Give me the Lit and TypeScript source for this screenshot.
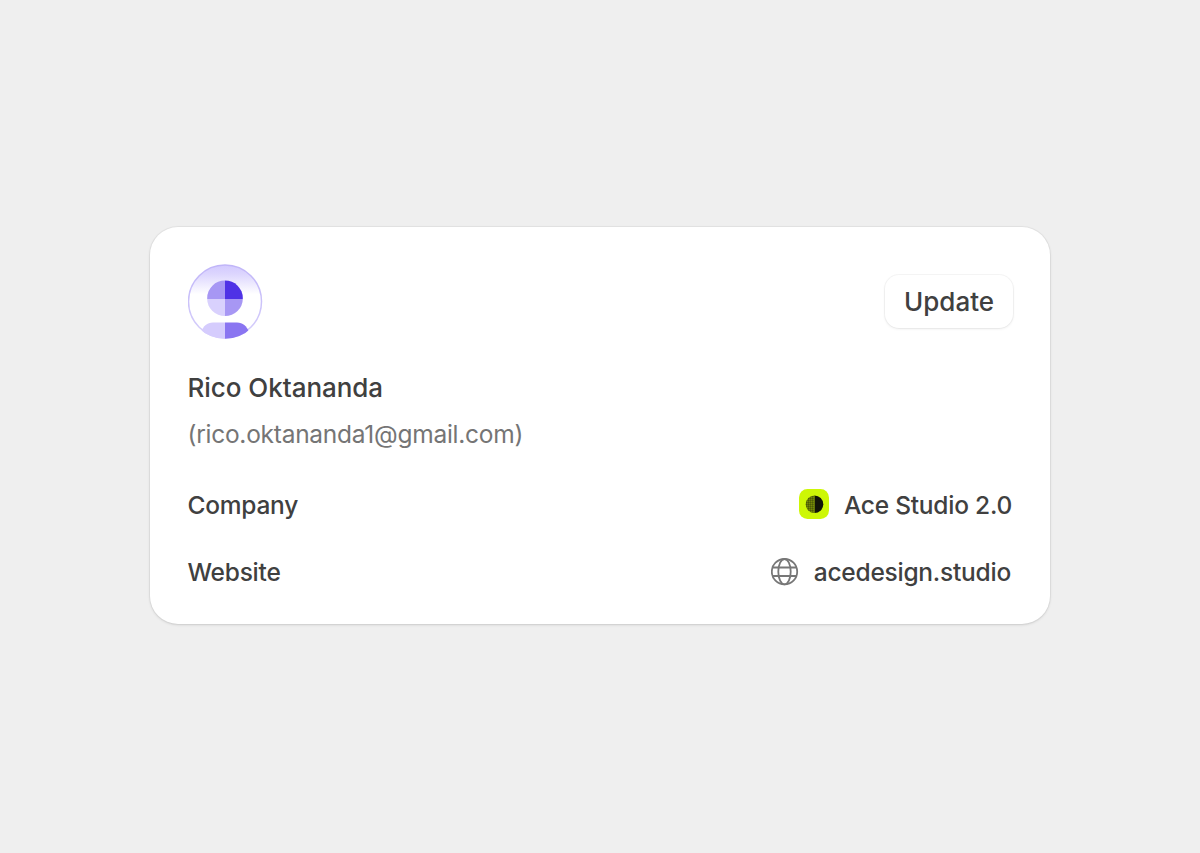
import { LitElement, css, html, svg } from "lit";
import { customElement, property } from "lit/decorators.js";

@customElement("user-avatar")
export class UserAvatar extends LitElement {
  static styles = css`
    :host {
      display: block;
      width: 75px;
      height: 75px;
    }

    svg {
      display: block;
    }
  `;

  render() {
    return html`
      <svg width="75" height="75" viewBox="0 0 75 75">
        <defs>
          <linearGradient id="sky" x1="0" y1="0" x2="0" y2="1">
            <stop offset="0" stop-color="#d3caff" />
            <stop offset="0.12" stop-color="#dcd5fe" />
            <stop offset="0.4" stop-color="#ffffff" />
          </linearGradient>
          <linearGradient id="ring" x1="0" y1="0" x2="0" y2="1">
            <stop offset="0" stop-color="#c0b5f8" />
            <stop offset="1" stop-color="#d6cffb" />
          </linearGradient>
          <clipPath id="frame"><circle cx="37" cy="37.5" r="37.3" /></clipPath>
        </defs>
        <circle cx="37" cy="37.5" r="36.5" fill="url(#sky)" stroke="url(#ring)" stroke-width="1.5" />
        <path d="M37 16.500v18.500H19.200V34A17.800 17.500 0 0 1 37 16.500Z" fill="#a797f4" />
        <path d="M37 16.500v18.500H54.800V34A17.800 17.500 0 0 0 37 16.500Z" fill="#4f32e6" />
        <path d="M37 52V35H19.200A17.800 17 0 0 0 37 52Z" fill="#d9d1fd" />
        <path d="M37 52V35H54.800A17.800 17 0 0 1 37 52Z" fill="#a797f4" />
        <g clip-path="url(#frame)">
          <path d="M37 58.500H25C19 58.500 15.500 62 13 68V76H37Z" fill="#d5ccfd" />
          <path d="M37 58.500H49C55 58.500 58.500 62 61 68V76H37Z" fill="#8a75f1" />
        </g>
      </svg>
    `;
  }
}

@customElement("detail-row")
export class DetailRow extends LitElement {
  static styles = css`
    :host {
      display: flex;
      align-items: center;
      justify-content: space-between;
      height: 32px;
    }

    .value {
      display: flex;
      align-items: center;
      gap: 15px;
    }
  `;

  @property() label = "";

  render() {
    return html`
      <span>${this.label}</span>
      <span class="value"><slot></slot></span>
    `;
  }
}

const companyLogo = () => html`
  <svg class="icon" width="30" height="32" viewBox="0 0 30 32">
    <defs>
      <pattern id="dots" width="2" height="2" patternUnits="userSpaceOnUse">
        <rect width="2" height="2" fill="#5e7005" />
        <rect width="1" height="1" fill="#74880a" />
        <rect x="1" y="1" width="1" height="1" fill="#4c5a08" />
      </pattern>
    </defs>
    <rect width="30" height="30" rx="8.5" fill="#cdf706" />
    <path d="M15.500 6.500A8.800 8.800 0 0 0 15.500 24.100Z" fill="url(#dots)" />
    <path d="M15.500 6.500A8.800 8.800 0 0 1 15.500 24.100Z" fill="#111408" />
    <path d="M15.300 7V24" stroke="#728708" stroke-width="0.6" />
  </svg>
`;

const globeIcon = () => html`
  <svg class="icon" width="28" height="28" viewBox="0 0 28 28" fill="none" stroke="#777" stroke-width="1.8">
    ${svg`
      <circle cx="13.500" cy="13.700" r="12.700" />
      <ellipse cx="13.500" cy="13.700" rx="6.200" ry="12.700" />
      <path d="M1.700 9.500H25.300M1.700 18H25.300" />
    `}
  </svg>
`;

@customElement("app-root")
export class AppRoot extends LitElement {
  static styles = css`
    :host {
      display: flex;
      justify-content: center;
      align-items: center;
      box-sizing: border-box;
      height: 100vh;
      padding-bottom: 2px;
      background: #efefef;
      color: #404040;
      font-family: "Inter", sans-serif;
      font-size: 24.500px;
      font-weight: 460;
      letter-spacing: -0.240px;
    }

    .card {
      box-sizing: border-box;
      width: 900px;
      height: 397px;
      padding: 37px 38px 0;
      border-radius: 28px;
      background: #fff;
      box-shadow: 0 0 0 1px rgba(0, 0, 0, 0.04), 0 1px 3px rgba(0, 0, 0, 0.12);
    }

    .top {
      display: flex;
      align-items: center;
      justify-content: space-between;
      margin-right: -1px;
    }

    .update {
      width: 128px;
      height: 53px;
      padding: 0;
      border: 0;
      border-radius: 14px;
      background: #fff;
      box-shadow: 0 0 0 1px rgba(0, 0, 0, 0.035), 0 1px 3px rgba(0, 0, 0, 0.08);
      color: inherit;
      font: inherit;
      font-size: 26px;
      letter-spacing: 0;
    }

    .name {
      margin-top: 33px;
      margin-left: -0.5px;
      font-size: 26px;
      line-height: 32px;
      letter-spacing: -0.04px;
    }

    .email {
      margin-top: 14px;
      margin-left: -0.5px;
      color: #757575;
      font-weight: 400;
      line-height: 32px;
      letter-spacing: -0.260px;
    }

    .details {
      display: flex;
      flex-direction: column;
      gap: 35px;
      margin: 39px 0 0 -0.5px;
    }

    .icon {
      display: block;
    }

    .site {
      margin-right: 1px;
    }
  `;

  render() {
    return html`
      <section class="card">
        <div class="top">
          <user-avatar></user-avatar>
          <button class="update">Update</button>
        </div>
        <div class="name">Rico Oktananda</div>
        <div class="email">(rico.oktananda1@gmail.com)</div>
        <div class="details">
          <detail-row label="Company">
            ${companyLogo()}
            <span>Ace Studio 2.0</span>
          </detail-row>
          <detail-row label="Website">
            ${globeIcon()}
            <span class="site">acedesign.studio</span>
          </detail-row>
        </div>
      </section>
    `;
  }
}
